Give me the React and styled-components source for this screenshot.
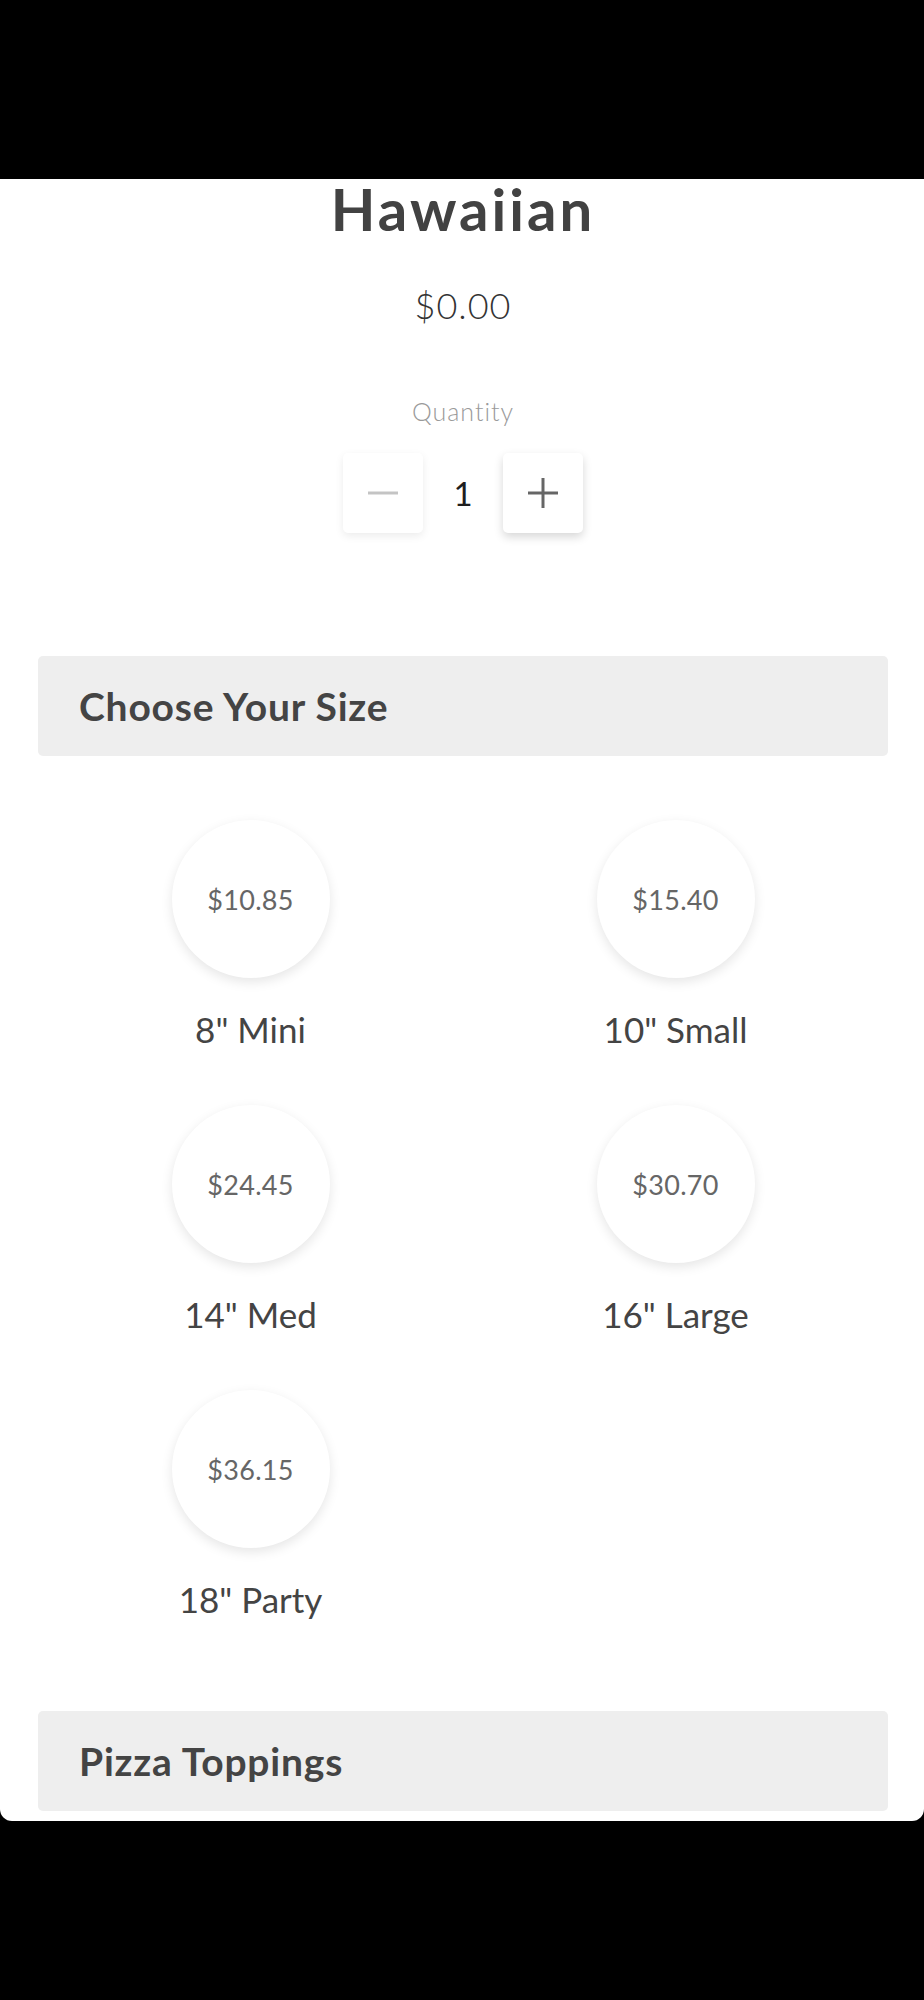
import React, { useState } from "react";
import styled, { createGlobalStyle } from "styled-components";

const GlobalStyle = createGlobalStyle`
  html, body {
    margin: 0;
    padding: 0;
    background: #000;
  }
  body {
    font-family: "Lato", "Noto Sans", sans-serif;
    -webkit-font-smoothing: antialiased;
  }
`;

const Backdrop = styled.div`
  height: 179px;
  background: #000;
`;

const Sheet = styled.div`
  height: 1642px;
  box-sizing: border-box;
  padding: 1px 36px 0 38px;
  background: #fff;
  border-radius: 0 0 12px 12px;
  display: flex;
  flex-direction: column;
`;

const Title = styled.h1`
  margin: 0;
  font-size: 58px;
  line-height: 58px;
  font-weight: 700;
  color: #424242;
  text-align: center;
  letter-spacing: 3px;
`;

const Price = styled.div`
  margin-top: 49px;
  font-size: 36px;
  line-height: 36px;
  font-weight: 300;
  color: #333;
  text-align: center;
  letter-spacing: 1px;
`;

const QtyLabel = styled.div`
  margin-top: 76px;
  font-size: 25px;
  line-height: 24px;
  font-weight: 300;
  color: #9a9a9a;
  text-align: center;
  letter-spacing: 1px;
`;

const Stepper = styled.div`
  margin-top: 30px;
  display: flex;
  justify-content: center;
  align-items: center;
`;

const StepButton = styled.button`
  width: 80px;
  height: 80px;
  padding: 0;
  border: none;
  border-radius: 5px;
  background: #fff;
  box-shadow: ${(p) =>
    p.$active
      ? "0 4px 10px rgba(0, 0, 0, 0.16)"
      : "0 3px 8px rgba(0, 0, 0, 0.08)"};
  display: flex;
  align-items: center;
  justify-content: center;
  cursor: pointer;
`;

const Count = styled.div`
  width: 80px;
  text-align: center;
  font-size: 33px;
  line-height: 80px;
  color: #1e1e1e;
`;

const SectionBar = styled.div`
  height: 100px;
  border-radius: 5px;
  background: #eeeeee;
  display: flex;
  align-items: center;
  padding-left: 41px;
  margin-top: ${(p) => p.$gap}px;
  flex-shrink: 0;
`;

const SectionTitle = styled.h2`
  margin: 0;
  font-size: 39px;
  line-height: 100px;
  font-weight: 700;
  color: #444;
  letter-spacing: 0.8px;
`;

const SizeGrid = styled.div`
  margin-top: 64px;
  display: grid;
  grid-template-columns: 1fr 1fr;
  row-gap: 58px;
`;

const SizeOption = styled.div`
  display: flex;
  flex-direction: column;
  align-items: center;
  cursor: pointer;
`;

const SizeCircle = styled.div`
  width: 158px;
  height: 158px;
  border-radius: 50%;
  background: #fff;
  box-shadow: ${(p) =>
    p.$selected
      ? "0 0 0 3px #444, 0 4px 12px rgba(0, 0, 0, 0.12)"
      : "0 4px 12px rgba(0, 0, 0, 0.1)"};
  display: flex;
  align-items: center;
  justify-content: center;
  font-size: 27px;
  color: #666;
  letter-spacing: 0.3px;
`;

const SizeName = styled.div`
  margin-top: 34px;
  font-size: 35px;
  line-height: 35px;
  color: #444;
`;

const Minus = () => (
  <svg width="32" height="6" viewBox="0 0 32 6">
    <line x1="1" y1="3" x2="31" y2="3" stroke="#c4c4c4" strokeWidth="3" />
  </svg>
);

const Plus = () => (
  <svg width="32" height="32" viewBox="0 0 32 32">
    <line x1="1" y1="16" x2="31" y2="16" stroke="#666" strokeWidth="3" />
    <line x1="16" y1="1" x2="16" y2="31" stroke="#666" strokeWidth="3" />
  </svg>
);

const sizes = [
  { name: '8" Mini', price: 10.85 },
  { name: '10" Small', price: 15.4 },
  { name: '14" Med', price: 24.45 },
  { name: '16" Large', price: 30.7 },
  { name: '18" Party', price: 36.15 },
];

export default function App() {
  const [qty, setQty] = useState(1);
  const [selected, setSelected] = useState(null);

  const total = selected === null ? 0 : sizes[selected].price * qty;

  return (
    <>
      <GlobalStyle />
      <Backdrop />
      <Sheet>
        <Title>Hawaiian</Title>
        <Price>${total.toFixed(2)}</Price>
        <QtyLabel>Quantity</QtyLabel>
        <Stepper>
          <StepButton onClick={() => setQty((q) => Math.max(1, q - 1))}>
            <Minus />
          </StepButton>
          <Count>{qty}</Count>
          <StepButton $active onClick={() => setQty((q) => q + 1)}>
            <Plus />
          </StepButton>
        </Stepper>

        <SectionBar $gap={123}>
          <SectionTitle>Choose Your Size</SectionTitle>
        </SectionBar>
        <SizeGrid>
          {sizes.map((s, i) => (
            <SizeOption key={s.name} onClick={() => setSelected(i)}>
              <SizeCircle $selected={selected === i}>
                ${s.price.toFixed(2)}
              </SizeCircle>
              <SizeName>{s.name}</SizeName>
            </SizeOption>
          ))}
        </SizeGrid>

        <SectionBar $gap={94}>
          <SectionTitle>Pizza Toppings</SectionTitle>
        </SectionBar>
      </Sheet>
    </>
  );
}
